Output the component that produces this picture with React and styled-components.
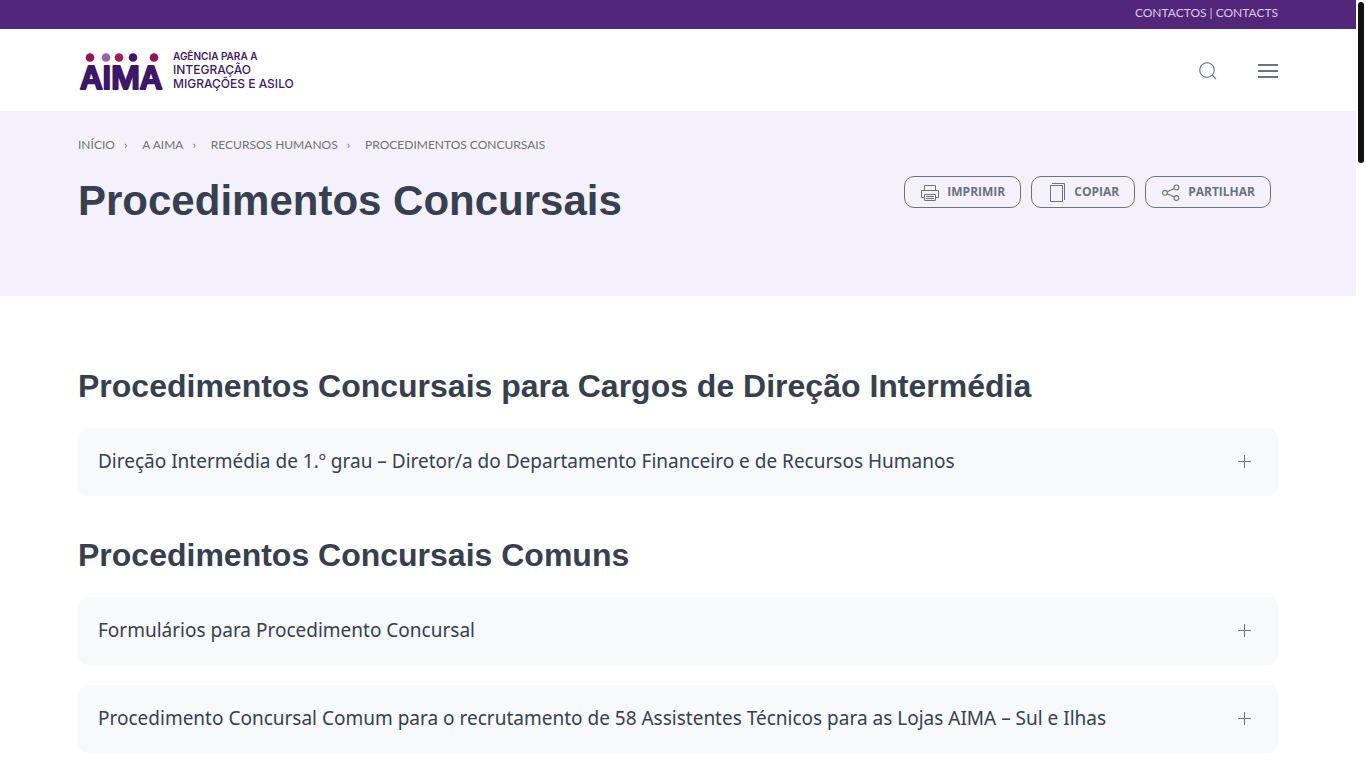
import React, { useState } from "react";
import styled, { createGlobalStyle } from "styled-components";

const ink = "#364050";
const muted = "#6b7280";
const textFont = '"Noto Sans", "Open Sans", sans-serif';
const labelFont = 'Lato, "Open Sans", sans-serif';

const GlobalStyle = createGlobalStyle`
  *, *::before, *::after { box-sizing: border-box; }
  body {
    margin: 0;
    background: #fff;
    color: ${muted};
    font-family: ${textFont};
    font-size: 16px;
    line-height: 24px;
  }
`;

const Page = styled.div`
  padding-right: 10px;
`;

const ScrollThumb = styled.div`
  position: fixed;
  top: 2px;
  right: 2px;
  width: 6px;
  height: 161px;
  border-radius: 3px;
  background: #111;
`;

const Container = styled.div`
  max-width: 1280px;
  margin: 0 auto;
  padding: 0 40px;
`;

const TopBar = styled.div`
  background: #52267a;
`;

const TopBarInner = styled(Container)`
  display: flex;
  justify-content: flex-end;
  padding-top: 5px;
  padding-bottom: 8px;
`;

const TopLink = styled.a`
  color: #d9cce4;
  font: 12px/16px ${labelFont};
  text-decoration: none;
  text-transform: uppercase;
`;

const HeaderInner = styled(Container)`
  display: flex;
  align-items: center;
  justify-content: space-between;
  height: 82px;
`;

const LogoLink = styled.a`
  display: block;
  svg { display: block; }
`;

const Tools = styled.div`
  display: flex;
  align-items: center;
  gap: 40px;
  padding-top: 2px;
`;

const IconButton = styled.button`
  display: block;
  padding: 0;
  border: 0;
  background: none;
  color: ${muted};
  cursor: pointer;
  svg { display: block; }
`;

const Hero = styled.section`
  background: #f5f1fc;
  padding: 24px 0 71px;
`;

const Crumbs = styled.ol`
  display: flex;
  flex-wrap: wrap;
  margin: 0 0 21px;
  padding: 0;
  list-style: none;
  font: 12px/20px ${labelFont};
`;

const Crumb = styled.li`
  text-transform: uppercase;
  &:not(:last-child)::after {
    content: "›";
    margin: 0 15px 0 9px;
  }
  a { color: inherit; text-decoration: none; }
`;

const TitleRow = styled.div`
  display: flex;
  justify-content: space-between;
  align-items: flex-start;
  padding-right: 7px;
`;

const Title = styled.h1`
  margin: 0;
  color: ${ink};
  font: bold 42px/49px "Liberation Sans", Arial, sans-serif;
`;

const Actions = styled.div`
  display: flex;
  gap: 10px;
`;

const ActionButton = styled.button`
  display: flex;
  align-items: center;
  gap: 7px;
  height: 32px;
  padding: 0 15px;
  border: 1px solid ${muted};
  border-radius: 10px;
  background: none;
  color: ${muted};
  font: bold 12px/30px "Open Sans", sans-serif;
  text-transform: uppercase;
  cursor: pointer;
`;

const Main = styled.main`
  padding: 70px 0 15px;
`;

const Heading = styled.h2`
  margin: 0 0 22px;
  color: ${ink};
  font: bold 32px/40px "Liberation Sans", Arial, sans-serif;
`;

const Group = styled.section`
  & + & { margin-top: 39px; }
`;

const Accordion = styled.div`
  display: grid;
  gap: 20px;
`;

const Toggle = styled.button`
  display: flex;
  align-items: center;
  justify-content: space-between;
  width: 100%;
  min-height: 68px;
  padding: 18px 27px 20px 20px;
  border: 0;
  border-radius: 10px;
  background: #f8f9fb;
  color: ${ink};
  font: 19px/30px ${textFont};
  text-align: left;
  cursor: pointer;
  svg { flex: none; color: ${muted}; }
`;

const Logo = () => (
  <svg width="228" height="60" viewBox="0 0 228 60" role="img" aria-label="AIMA">
    <circle cx="12" cy="17.5" r="4.3" fill="#8d1558" />
    <circle cx="28" cy="17.5" r="4.3" fill="#9165ab" />
    <circle cx="41" cy="17.5" r="4.3" fill="#a91b52" />
    <circle cx="55" cy="17.5" r="4.3" fill="#3d1769" />
    <circle cx="76" cy="17.5" r="4.3" fill="#8d1558" />
    <text x="2" y="49" fontFamily="Inter, sans-serif" fontWeight="600" fontSize="31" fill="#3d1769" stroke="#3d1769" strokeWidth="2" strokeLinejoin="round">AIMA</text>
    <g fontFamily="Inter, sans-serif" fill="#3d1769">
      <text x="95" y="20" fontWeight="600" fontSize="10">AGÊNCIA PARA A</text>
      <text x="95" y="34" fontWeight="500" fontSize="12">INTEGRAÇÃO</text>
      <text x="95" y="48" fontWeight="500" fontSize="12">MIGRAÇÕES E ASILO</text>
    </g>
  </svg>
);

const SearchIcon = () => (
  <svg width="20" height="20" viewBox="0 0 20 20" fill="none" stroke="currentColor" strokeWidth="1.1">
    <circle cx="9" cy="9" r="7.3" />
    <path d="M14 14l4 4" />
  </svg>
);

const MenuIcon = () => (
  <svg width="20" height="20" viewBox="0 0 20 20" fill="currentColor">
    <path d="M0 3h20v2H0zM0 9h20v2H0zM0 15h20v2H0z" />
  </svg>
);

const PrintIcon = () => (
  <svg width="20" height="20" viewBox="0 0 20 20" fill="none" stroke="currentColor">
    <path d="M4.5 15.5h-3v-7h17v7h-3M4.5 8.5v-5h11v5M4.5 12.5h11v6h-11zM6 14.5h8M6 16.5h8" />
  </svg>
);

const CopyIcon = () => (
  <svg width="20" height="20" viewBox="0 0 20 20" fill="none" stroke="currentColor">
    <path d="M3.5 3.5h12v16h-12zM5 1.5h12.5V18" />
  </svg>
);

const ShareIcon = () => (
  <svg width="20" height="20" viewBox="0 0 20 20" fill="none" stroke="currentColor" strokeWidth="1.1">
    <circle cx="15.4" cy="5.4" r="2.4" />
    <circle cx="15.4" cy="16" r="2.4" />
    <circle cx="4" cy="10.8" r="2.4" />
    <path d="M6.2 9.8l7-3.4M6.2 11.8l7 3.2" />
  </svg>
);

const PlusIcon = ({ open }) => (
  <svg width="13" height="13" viewBox="0 0 13 13" fill="currentColor">
    <path d="M0 6h13v1H0z" />
    {!open && <path d="M6 0h1v13H6z" />}
  </svg>
);

const AccordionItem = ({ label }) => {
  const [open, setOpen] = useState(false);
  return (
    <Toggle type="button" aria-expanded={open} onClick={() => setOpen(!open)}>
      {label}
      <PlusIcon open={open} />
    </Toggle>
  );
};

const crumbs = ["Início", "A AIMA", "Recursos Humanos", "Procedimentos Concursais"];

const actions = [
  { label: "Imprimir", Icon: PrintIcon },
  { label: "Copiar", Icon: CopyIcon },
  { label: "Partilhar", Icon: ShareIcon },
];

const groups = [
  {
    title: "Procedimentos Concursais para Cargos de Direção Intermédia",
    items: ["Direção Intermédia de 1.º grau – Diretor/a do Departamento Financeiro e de Recursos Humanos"],
  },
  {
    title: "Procedimentos Concursais Comuns",
    items: [
      "Formulários para Procedimento Concursal",
      "Procedimento Concursal Comum para o recrutamento de 58 Assistentes Técnicos para as Lojas AIMA – Sul e Ilhas",
    ],
  },
];

export default function App() {
  return (
    <Page>
      <GlobalStyle />
      <TopBar>
        <TopBarInner>
          <TopLink href="#contactos">Contactos | Contacts</TopLink>
        </TopBarInner>
      </TopBar>
      <header>
        <HeaderInner>
          <LogoLink href="#inicio"><Logo /></LogoLink>
          <Tools>
            <IconButton type="button" aria-label="Pesquisar"><SearchIcon /></IconButton>
            <IconButton type="button" aria-label="Menu"><MenuIcon /></IconButton>
          </Tools>
        </HeaderInner>
      </header>
      <Hero>
        <Container>
          <nav aria-label="Breadcrumb">
            <Crumbs>
              {crumbs.map((c, i) => (
                <Crumb key={c}>{i < crumbs.length - 1 ? <a href="#nav">{c}</a> : <span aria-current="page">{c}</span>}</Crumb>
              ))}
            </Crumbs>
          </nav>
          <TitleRow>
            <Title>Procedimentos Concursais</Title>
            <Actions>
              {actions.map(({ label, Icon }) => (
                <ActionButton type="button" key={label}><Icon />{label}</ActionButton>
              ))}
            </Actions>
          </TitleRow>
        </Container>
      </Hero>
      <Main>
        <Container>
          {groups.map((g) => (
            <Group key={g.title}>
              <Heading>{g.title}</Heading>
              <Accordion>
                {g.items.map((item) => <AccordionItem key={item} label={item} />)}
              </Accordion>
            </Group>
          ))}
        </Container>
      </Main>
      <ScrollThumb />
    </Page>
  );
}
